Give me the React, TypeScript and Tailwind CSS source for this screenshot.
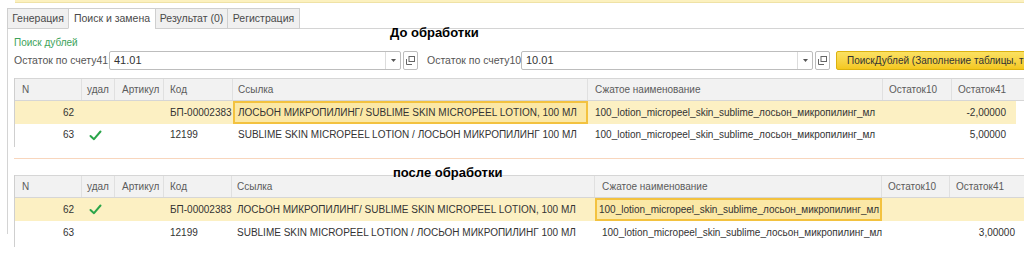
import React from "react";

const Check = () => (
  <svg width="13" height="11" viewBox="0 0 13 11" className="block">
    <path d="M1.5 6 L5 9.2 L11.5 1.5" fill="none" stroke="#2aa54a" strokeWidth="2" strokeLinecap="round" strokeLinejoin="round" />
  </svg>
);

type Row = {
  n: string;
  del: boolean;
  code: string;
  ref: string;
  short: string;
  o10: string;
  o41: string;
  sel: boolean;
  focus?: "ref" | "short";
};

function Table({ cols, rows, headerH, rowH, rightGap, tailH }: { cols: number[]; rows: Row[]; headerH: number; rowH: number[]; rightGap: number; tailH: number }) {
  const titles = ["N", "удал", "Артикул", "Код", "Ссылка", "Сжатое наименование", "Остаток10", "Остаток41"];
  const pls = [7, 5, 7, 6, 5, 7, 6, 6];
  return (
    <div className="border-l border-[#cfcfcf] w-[1010px]">
      <div className="flex bg-[#f2f2f2] border-t border-b border-[#d6d6d6] text-[#5b5b5b]" style={{ height: headerH }}>
        {titles.map((t, i) => (
          <div
            key={t}
            className={"flex items-center shrink-0 whitespace-nowrap overflow-hidden " + (i < 7 ? "border-r border-[#e0e0e0]" : "")}
            style={{ width: cols[i], paddingLeft: pls[i] }}
          >
            {t}
          </div>
        ))}
      </div>
      {rows.map((r, idx) => (
        <div key={idx} className="flex text-[#333]" style={{ height: rowH[idx] }}>
          <div className={"flex " + (r.sel ? "bg-[#fcf0c3]" : "bg-white")}>
            <div className="flex items-center justify-end pr-[8px] shrink-0" style={{ width: cols[0] }}>{r.n}</div>
            <div className="flex items-center pl-[7px] shrink-0" style={{ width: cols[1] }}>{r.del ? <Check /> : null}</div>
            <div className="shrink-0" style={{ width: cols[2] }} />
            <div className="flex items-center pl-[6px] shrink-0 whitespace-nowrap overflow-hidden" style={{ width: cols[3] }}>{r.code}</div>
            <div
              className={"flex items-center shrink-0 whitespace-nowrap overflow-hidden " + (r.focus === "ref" ? "border-2 border-[#f3c23f] bg-[#fbe8a6] pl-[3px]" : "pl-[5px]")}
              style={{ width: cols[4] }}
            >
              {r.ref}
            </div>
            <div
              className={"flex items-center shrink-0 whitespace-nowrap overflow-hidden " + (r.focus === "short" ? "border-2 border-[#f3c23f] bg-[#fbe8a6] pl-[2px]" : "pl-[7px]")}
              style={{ width: cols[5] }}
            >
              {r.short}
            </div>
            <div className="flex items-center justify-end shrink-0" style={{ width: cols[6] }}>{r.o10}</div>
            <div className="flex items-center justify-end pr-[10px] shrink-0" style={{ width: cols[7] - rightGap }}>{r.o41}</div>
          </div>
        </div>
      ))}
      <div style={{ height: tailH }} />
    </div>
  );
}

const REF1 = "ЛОСЬОН МИКРОПИЛИНГ/ SUBLIME SKIN MICROPEEL LOTION, 100 МЛ";
const REF2 = "SUBLIME SKIN MICROPEEL LOTION / ЛОСЬОН МИКРОПИЛИНГ 100 МЛ";
const SHORT = "100_lotion_micropeel_skin_sublime_лосьон_микропилинг_мл";

const Picker = ({ w, value }: { w: number; value: string }) => (
  <div className="flex items-center gap-[2px] shrink-0">
    <div className="flex h-[19px] border border-[#bdbdbd] rounded-[2px] bg-white" style={{ width: w }}>
      <div className="flex-1 flex items-center pl-[4px] text-[#333] text-[11px]">{value}</div>
      <div className="w-[15px] border-l border-[#dcdcdc] flex items-center justify-center">
        <svg width="5" height="3" viewBox="0 0 5 3"><path d="M0 0 H5 L2.5 3 Z" fill="#555" /></svg>
      </div>
    </div>
    <div className="w-[15px] h-[19px] border border-[#bdbdbd] rounded-[2px] bg-white flex items-center justify-center">
      <svg width="9" height="9" viewBox="0 0 9 9">
        <rect x="3" y="0.5" width="5.5" height="5" fill="none" stroke="#666" strokeWidth="1" />
        <path d="M0.5 3 V8.5 H6" fill="none" stroke="#666" strokeWidth="1" />
      </svg>
    </div>
  </div>
);

export default function App() {
  const top: Row[] = [
    { n: "62", del: false, code: "БП-00002383", ref: REF1, short: SHORT, o10: "", o41: "-2,00000", sel: true, focus: "ref" },
    { n: "63", del: true, code: "12199", ref: REF2, short: SHORT, o10: "", o41: "5,00000", sel: false },
  ];
  const bottom: Row[] = [
    { n: "62", del: true, code: "БП-00002383", ref: REF1, short: SHORT, o10: "", o41: "", sel: true, focus: "short" },
    { n: "63", del: false, code: "12199", ref: REF2, short: SHORT, o10: "", o41: "3,00000", sel: false },
  ];
  return (
    <div className="relative w-[1024px] h-[268px] bg-white overflow-hidden text-[10px] leading-none font-['Liberation_Sans',Arial,sans-serif]">
      <div className="ml-[15px] h-[3px] bg-[#fcf1bf] border-b border-[#efe2a6]" />
      <div className="flex mt-[5px] pl-[7px] h-[21px]">
        {["Генерация", "Поиск и замена", "Результат (0)", "Регистрация"].map((t, i) => (
          <div
            key={t}
            className={
              "flex items-center justify-center border border-[#cfcfcf] text-[#4a4a4a] text-[10.5px] " +
              (i === 1 ? "bg-white border-b-white" : "bg-[#f0f0f0]") +
              (i > 0 ? " -ml-px" : "")
            }
            style={{ width: [62, 88, 73, 73][i] }}
          >
            {t}
          </div>
        ))}
        <div className="flex-1 border-b border-[#d4d4d4]" />
      </div>
      <div className="ml-[7px] h-[205px] border-l border-[#d4d4d4] pl-[6px]">
        <div className="pt-[9px] text-[#3da35a] h-[22px]">Поиск дублей</div>
        <div className="flex items-center h-[19px]">
          <span className="text-[#555] w-[95px] shrink-0 whitespace-nowrap text-[10.5px]">Остаток по счету41:</span>
          <Picker w={292} value="41.01" />
          <span className="text-[#555] ml-[9px] w-[94px] shrink-0 whitespace-nowrap text-[10.5px]">Остаток по счету10:</span>
          <Picker w={292} value="10.01" />
          <div className="ml-[6px] h-[19px] w-[200px] shrink-0 border border-[#dcb20f] rounded-[2px] bg-gradient-to-b from-[#fbe161] to-[#f4c81c] flex items-center pl-[10px] text-[#333] whitespace-nowrap text-[10px]">
            ПоискДублей (Заполнение таблицы, только отмеченные)
          </div>
        </div>
        <div className="h-[8px]" />
        <Table cols={[67, 33, 49, 69, 355, 295, 69, 73]} rows={top} headerH={23} rowH={[23, 22]} rightGap={9} tailH={1} />
        <div className="h-[11px]" />
        <div className="h-px bg-[#f8d6bd] w-[1010px]" />
        <div className="h-[16px]" />
        <Table cols={[67, 33, 49, 68, 363, 287, 68, 75]} rows={bottom} headerH={23} rowH={[23, 23]} rightGap={0} tailH={3} />
      </div>
      <div className="absolute left-[390px] top-[26px] text-[13px] font-bold text-black font-['Liberation_Sans',sans-serif]">До обработки</div>
      <div className="absolute left-[393px] top-[166px] text-[13px] font-bold text-black font-['Liberation_Sans',sans-serif]">после обработки</div>
    </div>
  );
}
